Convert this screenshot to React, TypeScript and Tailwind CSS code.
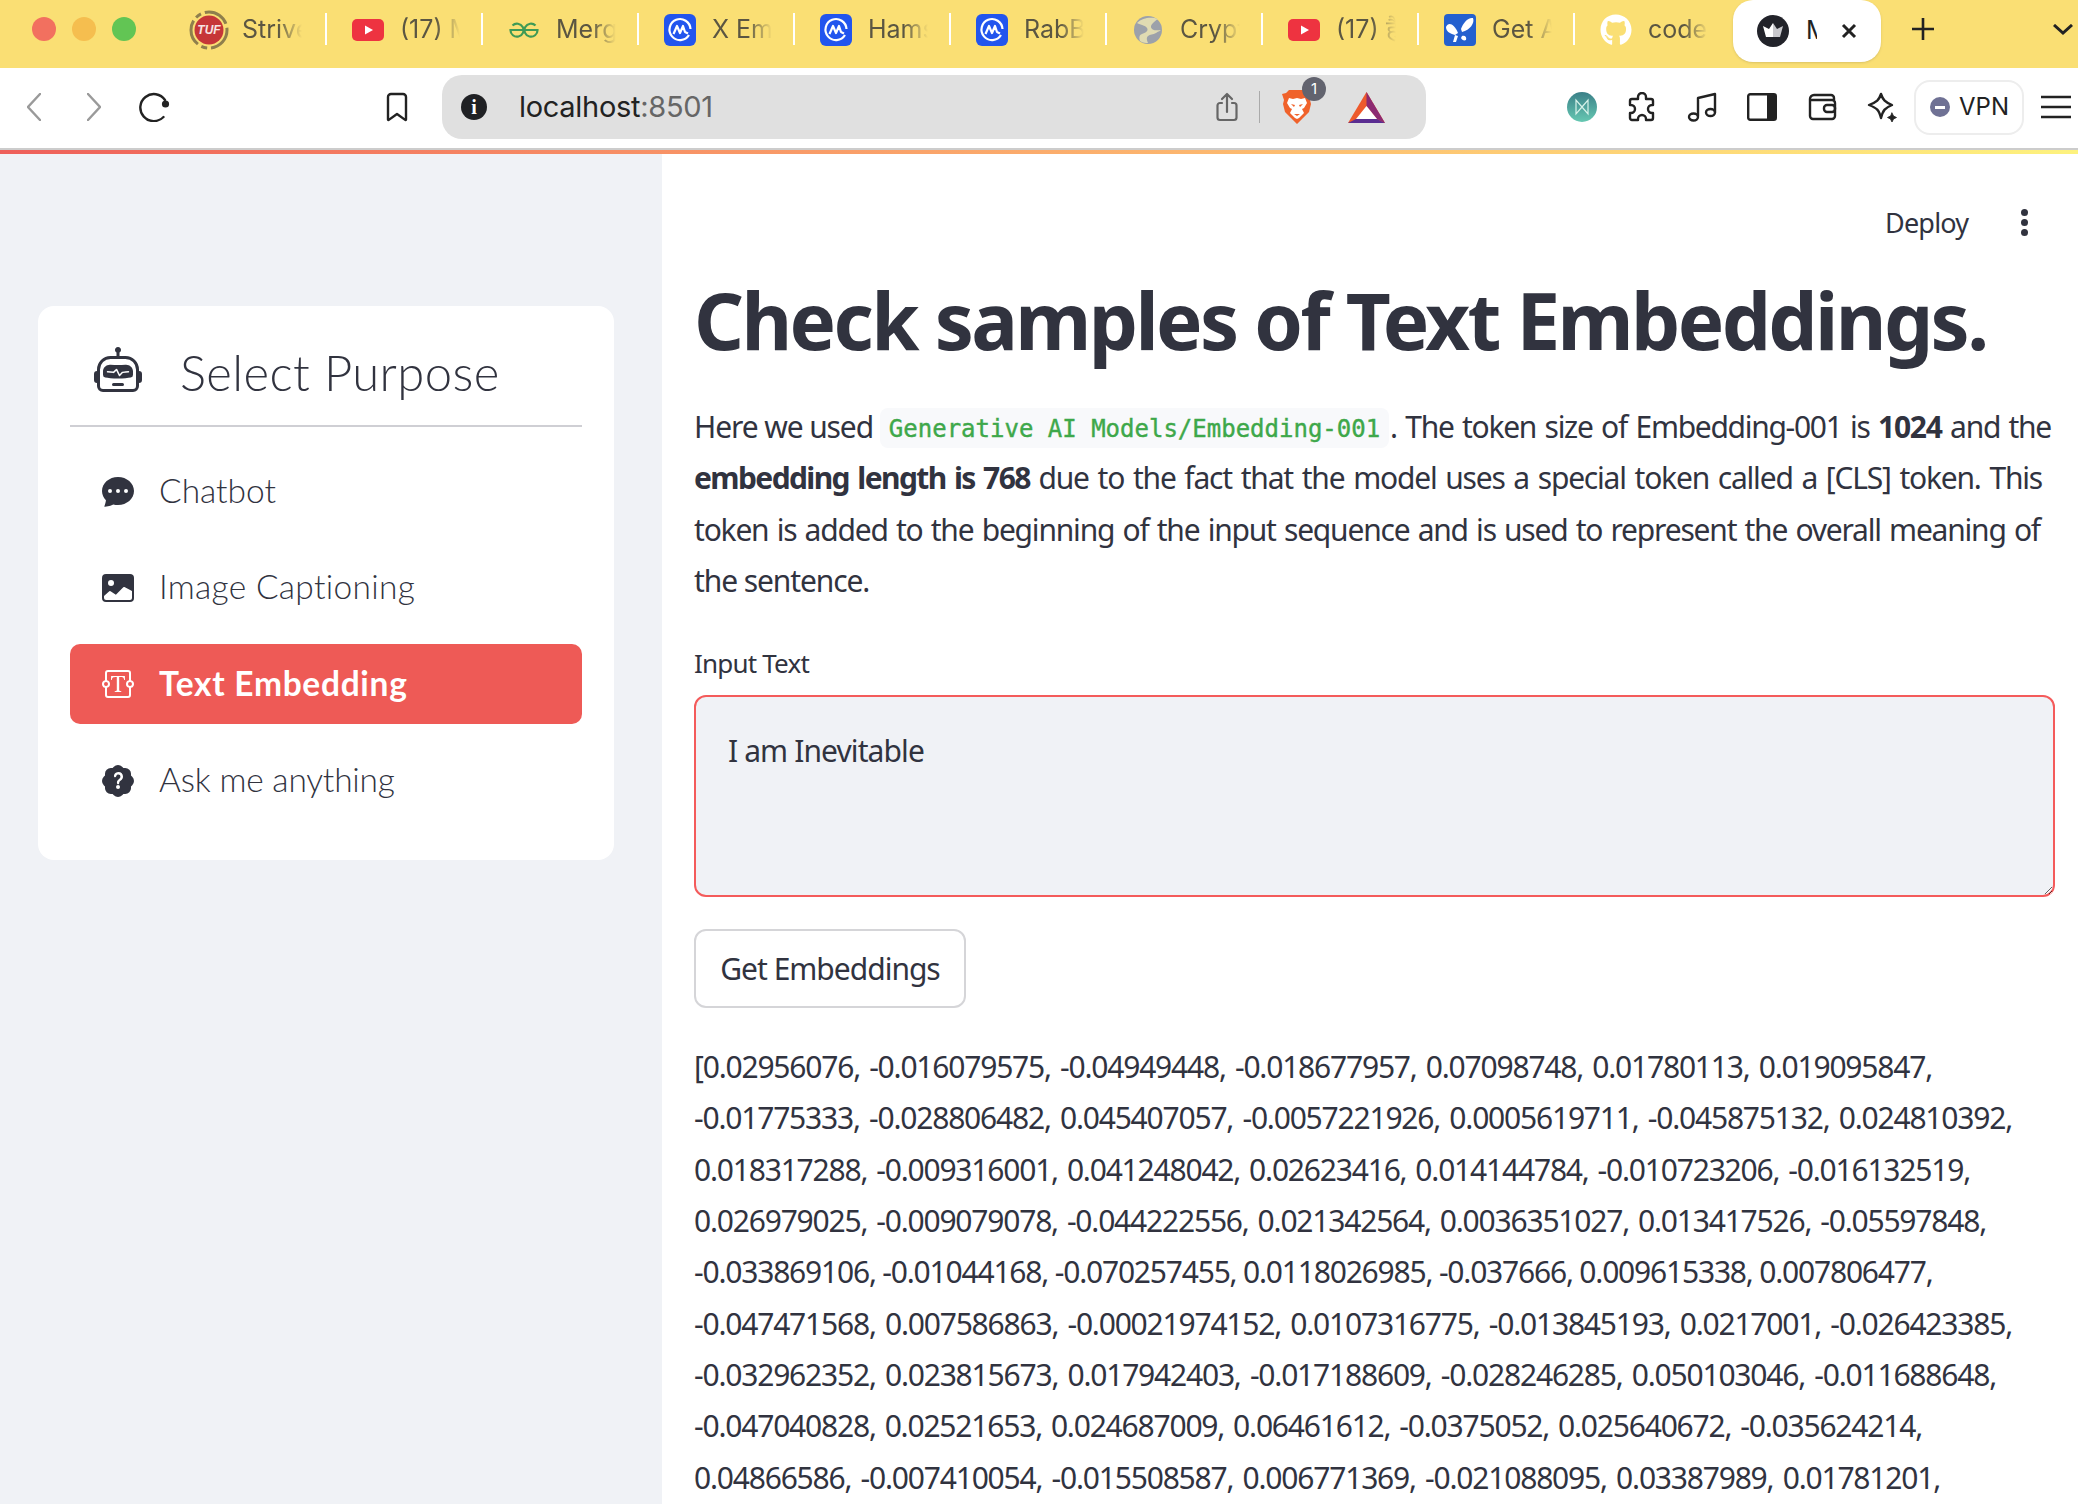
import { BsChatDotsFill, BsImageFill, BsTextareaT, BsPatchQuestionFill, BsRobot } from "react-icons/bs";
import { FaGithub } from "react-icons/fa";
import type { ReactNode } from "react";

function YouTube() {
  return <svg width="32" height="22" viewBox="0 0 32 22"><rect width="32" height="22" rx="5" fill="#ee3340" /><path d="M13 6.500l8 4.500-8 4.500z" fill="#fff" /></svg>;
}
function Gfg() {
  return <svg width="30" height="16" viewBox="0 0 30 16" fill="none" stroke="#3f9a55" strokeWidth="2.2"><path d="M3.500 3.500A6.500 6.500 0 1 1 1.500 8H14.500" /><path d="M26.500 3.500A6.500 6.500 0 1 0 28.500 8H15.500" /></svg>;
}
function Cmc() {
  return <svg width="32" height="32" viewBox="0 0 32 32"><rect width="32" height="32" rx="6" fill="#2255ee" /><path d="M25 21A10.500 10.500 0 1 1 26.500 15" fill="none" stroke="#fff" strokeWidth="2.2" /><path d="M9.500 20l3.500-8 3 7 3-7 2 6 3 1.500" fill="none" stroke="#fff" strokeWidth="2.200" strokeLinejoin="round" /></svg>;
}
function Tuf() {
  return <div className="relative flex h-[40px] w-[40px] items-center justify-center">
    <svg className="absolute inset-0" width="40" height="40" viewBox="0 0 40 40"><circle cx="20" cy="20" r="18" fill="none" stroke="#8f7f4c" strokeWidth="3" strokeDasharray="26 4 6 4" /><circle cx="20" cy="20" r="14.500" fill="#c63638" /></svg>
    <span className="relative font-['Liberation_Sans',sans-serif] text-[12px] font-bold italic text-[#f6e4e4]">TUF</span>
  </div>;
}
function Globe() {
  return <svg width="28" height="28" viewBox="0 0 28 28"><circle cx="14" cy="14" r="14" fill="#9ca1aa" /><path d="M3 7c4 2 8 2 10 5s-2 5-5 6-3 4-2 7c3 2 6 2 8 2-1-3-2-5 0-7s5-1 8-3 4-2 5-3c-3 0-7 1-9-1s-1-4 1-6 3-3 5-4c-6-2-15-2-21 4z" fill="#e0dbb2" /></svg>;
}
function Butterfly() {
  return <svg width="32" height="32" viewBox="0 0 32 32"><rect width="32" height="32" rx="4" fill="#2460cf" /><path d="M2 13c2-5 8-4 12 6l-3 2c-4-1-9-3-9-8z" fill="#fff" /><path d="M29 4c2 5-3 12-11 14l-1-3c2-6 7-12 12-11z" fill="#fff" /><path d="M11 21l-2 7 3 0 2-6zM18 22c3-1 5 1 4 4-2 1-4 0-5-2z" fill="#fff" /></svg>;
}
function Crown() {
  return <svg width="32" height="32" viewBox="0 0 32 32"><circle cx="16" cy="16" r="16" fill="#22232a" /><path d="M6 11l6 3 4-6v14H9z" fill="#fff" /><path d="M16 8l4 6 6-3-3 11h-7z" fill="#c9c9cd" /></svg>;
}

const fade = "overflow-hidden whitespace-nowrap [mask-image:linear-gradient(to_right,black_60%,transparent)]";

function Tab({ icon, title, w = "w-[156px]", sep = true, pad = "pl-[9px] w-[73px]" }: { icon: ReactNode; title: string; w?: string; sep?: boolean; pad?: string }) {
  return <div className={"relative flex h-[60px] items-center " + w}>
    <div className={"flex shrink-0 items-center justify-center " + pad}>{icon}</div>
    <span className={"w-[60px] text-[25px] text-[#5b5642] " + fade}>{title}</span>
    {sep && <div className="absolute right-0 top-[13px] h-[32px] w-[2px] bg-white" />}
  </div>;
}

function TabBar() {
  return <div className="flex h-[68px] items-start bg-[#fadf74] font-['Inter',sans-serif]">
    <div className="flex h-[58px] w-[171px] shrink-0 items-center gap-[16px] pl-[32px]">
      <div className="h-[24px] w-[24px] rounded-full bg-[#f2705f]" />
      <div className="h-[24px] w-[24px] rounded-full bg-[#f5be4f]" />
      <div className="h-[24px] w-[24px] rounded-full bg-[#62c554]" />
    </div>
    <Tab icon={<Tuf />} title="Striver" pad="pl-[5px] w-[71px]" />
    <Tab icon={<YouTube />} title="(17) Mo" />
    <Tab icon={<Gfg />} title="Merge" />
    <Tab icon={<Cmc />} title="X Embe" />
    <Tab icon={<Cmc />} title="Hamst" />
    <Tab icon={<Cmc />} title="RabBit" />
    <Tab icon={<Globe />} title="Crypto" />
    <Tab icon={<YouTube />} title="(17) है" />
    <Tab icon={<Butterfly />} title="Get Ai" />
    <Tab icon={<FaGithub className="text-[32px] text-white" />} title="code-" w="w-[158px]" sep={false} />
    <div className="flex h-[62px] w-[148px] shrink-0 items-center rounded-[20px] bg-white pl-[24px] shadow-sm">
      <Crown />
      <span className="ml-[17px] w-[11px] overflow-hidden text-[25px] text-[#222]">Main</span>
      <svg className="ml-[24px]" width="16" height="16" viewBox="0 0 16 16" stroke="#222" strokeWidth="3"><path d="M2 2l12 12M14 2L2 14" /></svg>
    </div>
    <svg className="ml-[31px] mt-[18px]" width="22" height="22" viewBox="0 0 22 22" stroke="#222" strokeWidth="2.600"><path d="M11 0v22M0 11h22" /></svg>
    <svg className="ml-[119px] mt-[24px]" width="20" height="11" viewBox="0 0 20 11" fill="none" stroke="#222" strokeWidth="3"><path d="M1 1l9 8 9-8" /></svg>
  </div>;
}

const stroke = { fill: "none", stroke: "#222", strokeWidth: 2.4, strokeLinecap: "round" as const, strokeLinejoin: "round" as const };

function ToolBar() {
  return <div className="flex h-[82px] items-center border-b-2 border-[#cccccc] pb-[2px] font-['Inter',sans-serif]">
    <svg className="ml-[27px]" width="14" height="28" viewBox="0 0 14 28" fill="none" stroke="#9a9a9a" strokeWidth="2.400" strokeLinecap="round"><path d="M13 1L1 14l12 13" /></svg>
    <svg className="ml-[46px]" width="14" height="28" viewBox="0 0 14 28" fill="none" stroke="#9a9a9a" strokeWidth="2.400" strokeLinecap="round"><path d="M1 1l12 13L1 27" /></svg>
    <svg className="ml-[38px]" width="31" height="30" viewBox="0 0 31 30" fill="none" stroke="#222" strokeWidth="2.400" strokeLinecap="round"><path d="M26 8A13.500 13.500 0 1 0 24.500 25" /><circle cx="26.500" cy="12" r="3.600" fill="#222" stroke="none" /></svg>
    <svg className="ml-[216px]" width="22" height="30" viewBox="0 0 22 30" {...stroke}><path d="M2 5a3 3 0 0 1 3-3h12a3 3 0 0 1 3 3v22.500a.500.500 0 0 1-.800.400L11 22l-8.200 5.900a.500.500 0 0 1-.800-.400z" /></svg>
    <div className="ml-[34px] flex h-[64px] w-[984px] items-center rounded-[20px] bg-[#e0e0e0]">
      <div className="ml-[19px] flex h-[26px] w-[26px] items-center justify-center rounded-full bg-[#202124] font-['Liberation_Serif',serif] text-[20px] font-bold text-white">i</div>
      <span className="ml-[32px] w-[192px] text-[29px] text-[#222] tracking-[-0.3px]">localhost<span className="text-[#666]">:8501</span></span>
      <svg className="ml-[505px]" width="22" height="30" viewBox="0 0 22 30" fill="none" stroke="#666" strokeWidth="2.200" strokeLinecap="round" strokeLinejoin="round"><path d="M6 11H4a2.500 2.500 0 0 0-2.500 2.500v12A2.500 2.500 0 0 0 4 28h14a2.500 2.500 0 0 0 2.500-2.500v-12A2.500 2.500 0 0 0 18 11h-2M11 20V2M6 7l5-5 5 5" /></svg>
      <div className="ml-[21px] h-[32px] w-[1px] bg-[#aaa]" />
      <div className="relative ml-[22px] h-[36px] w-[30px]">
        <svg width="30" height="37" viewBox="0 0 30 37"><path d="M7 1h16l3 3 4 1-2 6 1 4-2 8-6 6-6 6-6-6-6-6-2-8 1-4-2-6 4-1z" fill="#f0622b" /><path d="M7 9l4 1 4-1 4 1 4-1 2 5-3 5-2 1 2 4-5 5-2 1-2-1-5-5 2-4-2-1-3-5z" fill="#fff" /><path d="M9 15l4 1-1 2zM21 15l-4 1 1 2zM12 25h6l-3 2z" fill="#f0622b" /></svg>
        <div className="absolute left-[20px] top-[-12px] flex h-[24px] w-[24px] items-center justify-center rounded-full bg-[#62636e] text-[15px] text-white">1</div>
      </div>
      <svg className="ml-[36px]" width="37" height="31" viewBox="0 0 37 31"><path d="M18.500 0L0 31h37z" fill="#ee5a2c" /><path d="M18.500 0L37 31l-8-4-10.500-13z" fill="#8c2a72" /><path d="M0 31l8-4h21l8 4z" fill="#5a2d91" /><path d="M18.500 14L8 27h21z" fill="#fff" /></svg>
    </div>
    <svg className="ml-[141px]" width="30" height="30" viewBox="0 0 30 30"><defs><linearGradient id="mg" x1="0" y1="0" x2="0" y2="1"><stop offset="0" stopColor="#3b8088" /><stop offset="1" stopColor="#66c8b2" /></linearGradient></defs><circle cx="15" cy="15" r="15" fill="url(#mg)" /><path d="M9 8v14l6-7 6 7V8l-6 7z" fill="none" stroke="#d8f2ea" strokeWidth="1.200" /></svg>
    <svg className="ml-[30px]" width="30" height="30" viewBox="0 0 30 30" {...stroke}><path d="M11 5a4 4 0 0 1 8 0v2h5a2 2 0 0 1 2 2v4h-1a4 4 0 0 0 0 8h1v5a2 2 0 0 1-2 2h-5v-1a4 4 0 0 0-8 0v1H5a2 2 0 0 1-2-2v-5h1a4 4 0 0 0 0-8H3V9a2 2 0 0 1 2-2h6z" /></svg>
    <svg className="ml-[30px]" width="30" height="30" viewBox="0 0 30 30" {...stroke}><path d="M11 24V6l17-4v18" /><ellipse cx="6.500" cy="25" rx="4.500" ry="3.500" /><ellipse cx="23.500" cy="20.500" rx="4.500" ry="3.500" /></svg>
    <svg className="ml-[30px]" width="30" height="28" viewBox="0 0 30 28"><rect x="1.200" y="1.200" width="27.600" height="25.600" rx="2" fill="none" stroke="#222" strokeWidth="2.400" /><rect x="20" y="1" width="9" height="26" fill="#222" /></svg>
    <svg className="ml-[30px]" width="30" height="28" viewBox="0 0 30 28" {...stroke}><path d="M3 6a4 4 0 0 1 4-4h17a3 3 0 0 1 3 3v2M3 6v17a3 3 0 0 0 3 3h19a3 3 0 0 0 3-3V10a3 3 0 0 0-3-3H5" /><rect x="17" y="12" width="11" height="7" rx="3" /></svg>
    <svg className="ml-[30px]" width="30" height="30" viewBox="0 0 30 30" {...stroke}><path d="M14 2c2 6 4 8 11 11-7 3-9 5-11 13-2-8-4-10-12-13 8-3 10-5 12-11z" /><path d="M25 21l1.500 3 3 1.500-3 1.500-1.500 3-1.500-3-3-1.500 3-1.500z" fill="#222" strokeWidth="0.800" /></svg>
    <div className="ml-[17px] flex h-[55px] w-[110px] items-center rounded-[16px] border-2 border-[#ededed] pl-[14px]">
      <div className="flex h-[20px] w-[20px] items-center justify-center rounded-full bg-[#6f7194]"><div className="h-[3px] w-[10px] bg-white" /></div>
      <span className="ml-[9px] text-[24px] text-[#222]">VPN</span>
    </div>
    <svg className="ml-[17px]" width="30" height="24" viewBox="0 0 30 24" stroke="#222" strokeWidth="2.400"><path d="M0 2h30M0 12h30M0 22h30" /></svg>
  </div>;
}

function NavItem({ icon, label, active, track = "" }: { icon: ReactNode; label: string; active?: boolean; track?: string }) {
  return <div className={"flex h-[80px] items-center rounded-[10px] pl-[32px] text-[33.500px] " + (active ? "bg-[#ee5a56] font-bold text-white" : "font-light text-[#31333f]")}>
    <span className="flex w-[32px] justify-center text-[32px]">{icon}</span>
    <span className={"mb-[2px] ml-[25px] whitespace-nowrap " + track}>{label}</span>
  </div>;
}

function Sidebar() {
  return <aside className="h-[1350px] w-[662px] shrink-0 bg-[#f0f2f6] px-[38px] pt-[152px] font-['Lato',sans-serif]">
    <div className="h-[554px] w-[576px] rounded-[16px] bg-white px-[32px] pt-[38px]">
      <div className="flex h-[83px] items-start border-b-2 border-[#cfcfd4]">
        <BsRobot className="ml-[24px] mt-[3px] text-[48px] text-[#31333f]" />
        <span className="ml-[38px] text-[49px] font-light leading-[56px] tracking-[0.4px] text-[#31333f]">Select Purpose</span>
      </div>
      <div className="mt-[24px] flex flex-col gap-[16.500px]">
        <NavItem icon={<BsChatDotsFill />} label="Chatbot" />
        <NavItem icon={<BsImageFill />} label="Image Captioning" track="tracking-[0.3px]" />
        <NavItem icon={<BsTextareaT />} label="Text Embedding" active track="tracking-[0.7px]" />
        <NavItem icon={<BsPatchQuestionFill />} label="Ask me anything" track="tracking-[-0.2px]" />
      </div>
    </div>
  </aside>;
}

const justified = "block whitespace-nowrap [text-align-last:justify] tracking-[-1.200px]";

function Main() {
  return <main className="min-w-0 flex-1 pl-[32px] text-[30px] leading-[51.300px] text-[#31333f] font-['Noto_Sans',sans-serif]">
    <div className="flex h-[122px] items-start pt-[46px]">
      <span className="ml-[1191px] text-[27px] leading-[46px] tracking-[-0.800px]">Deploy</span>
      <div className="ml-[53px] mt-[9px] flex flex-col gap-[3px]">
        <div className="h-[7px] w-[7px] rounded-full bg-[#31333f]" />
        <div className="h-[7px] w-[7px] rounded-full bg-[#31333f]" />
        <div className="h-[7px] w-[7px] rounded-full bg-[#31333f]" />
      </div>
    </div>
    <h1 className="whitespace-nowrap text-[78px] font-bold leading-[88px] tracking-[-2.600px]">Check samples of Text Embeddings.</h1>
    <div className="mt-[37px]">
      <div className="flex h-[51.300px] items-center whitespace-nowrap">
        <span className="w-[186px] tracking-[-1.100px]">Here we used</span>
        <code className="mt-[3px] flex h-[40px] w-[509px] items-center justify-center rounded-[8px] bg-[#f8f9fb] pt-[3px] font-['DejaVu_Sans_Mono',monospace] text-[24px] font-normal text-[#3ea84a] [-webkit-text-stroke:0.4px_#3ea84a]">Generative AI Models/Embedding-001</code>
        <span className="ml-[1px] w-[661px] [text-align-last:justify] tracking-[-1.300px]">. The token size of Embedding-001 is <b>1024</b> and the</span>
      </div>
      <span className={justified + " w-[1348px]"}><b className="tracking-[-1.600px]">embedding length is 768</b> due to the fact that the model uses a special token called a [CLS] token. This</span>
      <span className={justified + " w-[1346px]"}>token is added to the beginning of the input sequence and is used to represent the overall meaning of</span>
      <span className="block tracking-[-1.100px]">the sentence.</span>
    </div>
    <label className="mt-[37px] block text-[26px] leading-[40px] tracking-[-0.800px]">Input Text</label>
    <textarea defaultValue="I am Inevitable" className="mt-[12px] block h-[202px] w-[1361px] resize-y rounded-[12px] border-2 border-[#f45b5b] bg-[#f0f2f6] px-[32px] py-[32px] text-[30px] leading-[44px] tracking-[-0.900px] text-[#31333f] outline-none" />
    <button className="mt-[32px] flex h-[79px] w-[272px] items-center justify-center rounded-[12px] border-2 border-[#d5d5d8] bg-white text-[30px] tracking-[-1px]">Get Embeddings</button>
    <div className="mt-[33px]">
      <span className={justified + " w-[1238px]"}>[0.02956076, -0.016079575, -0.04949448, -0.018677957, 0.07098748, 0.01780113, 0.019095847,</span>
      <span className={justified + " w-[1318px]"}>-0.01775333, -0.028806482, 0.045407057, -0.0057221926, 0.0005619711, -0.045875132, 0.024810392,</span>
      <span className={justified + " w-[1276px]"}>0.018317288, -0.009316001, 0.041248042, 0.02623416, 0.014144784, -0.010723206, -0.016132519,</span>
      <span className={justified + " w-[1292px]"}>0.026979025, -0.009079078, -0.044222556, 0.021342564, 0.0036351027, 0.013417526, -0.05597848,</span>
      <span className={justified + " w-[1216px]"}>-0.033869106, -0.01044168, -0.070257455, 0.0118026985, -0.037666, 0.009615338, 0.007806477,</span>
      <span className={justified + " w-[1318px]"}>-0.047471568, 0.007586863, -0.00021974152, 0.0107316775, -0.013845193, 0.0217001, -0.026423385,</span>
      <span className={justified + " w-[1302px]"}>-0.032962352, 0.023815673, 0.017942403, -0.017188609, -0.028246285, 0.050103046, -0.011688648,</span>
      <span className={justified + " w-[1228px]"}>-0.047040828, 0.02521653, 0.024687009, 0.06461612, -0.0375052, 0.025640672, -0.035624214,</span>
      <span className={justified + " w-[1246px]"}>0.04866586, -0.007410054, -0.015508587, 0.006771369, -0.021088095, 0.03387989, 0.01781201,</span>
    </div>
  </main>;
}

export default function App() {
  return <div className="h-[1504px] w-[2078px] overflow-hidden bg-white">
    <TabBar />
    <ToolBar />
    <div className="h-[4px] bg-gradient-to-r from-[#ee5f5a] to-[#fdf27e]" />
    <div className="flex">
      <Sidebar />
      <Main />
    </div>
  </div>;
}
